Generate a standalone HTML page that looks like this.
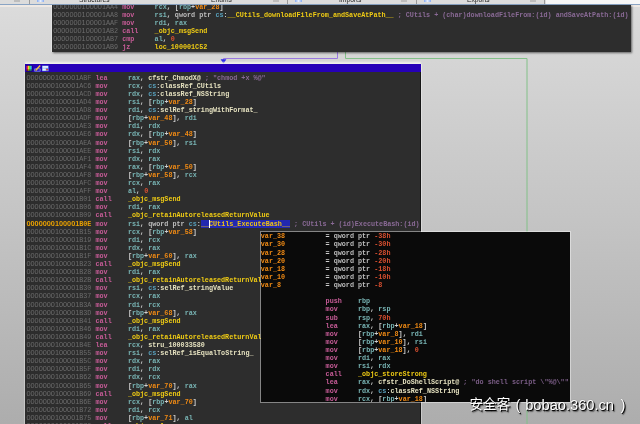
<!DOCTYPE html>
<html><head><meta charset="utf-8"><title>IDA graph view</title><style>
html,body{margin:0;padding:0}
body{width:640px;height:424px;overflow:hidden;position:relative;background:#c8c8c8}
#all{position:absolute;left:-4px;top:-4px;width:648px;height:432px;overflow:hidden;filter:blur(0.4px)}
#in{position:absolute;left:4px;top:4px;width:644px;height:428px;background:linear-gradient(#dcdcdc 0,#d5d5d5 60px,#c4c4c4 220px,#adadad 424px);font-family:"Liberation Mono",monospace}
.l{position:absolute;white-space:pre;font-size:6.766px;line-height:8.10px;height:8.10px;font-weight:bold;color:#d8d8d8}
.node{position:absolute;background:#2d2d2d;overflow:hidden}
.a{color:#6c6c6c;font-weight:normal}.ah{color:#e8a000}
.z{font-family:"Liberation Sans",sans-serif;font-size:7.301px}
.m{color:#c85c98}.r{color:#78b4b4}.s{color:#58a0bc}.v{color:#f08a14}.f{color:#f0cc14}.n{color:#e6e2c0}
.q{color:#bebebe}.d{color:#dc5030}.p{color:#d0d0d0}.c{color:#8a6a96}
.sel{background:#2228b0;color:#f0c414}
#pop .c{color:#7c5e88}
#tabs{position:absolute;left:0;top:0;width:640px;height:4px;background:#dcdcdc;overflow:hidden;font-family:"Liberation Sans",sans-serif}
#tabs span{position:absolute;top:-4.2px;font-size:6.7px;line-height:8px;color:#222}
#tabs i{position:absolute;top:0;width:1px;height:4px;background:#9a9a9a}
#tabs b{position:absolute;top:0;height:2px;display:block}
#wm{position:absolute;left:0;top:0;font-family:"Liberation Sans","Noto Sans CJK SC",sans-serif;color:#fff;text-shadow:1px 1px 0.6px rgba(0,0,0,.95),1.6px 1.6px 1.2px rgba(0,0,0,.55),0 0 1px rgba(0,0,0,.35)}
#wm span{position:absolute;white-space:pre;line-height:20px;top:395px;font-size:14.67px}
</style></head><body><div id="all"><div id="in">
<div id="tabs">
<b style="left:14px;width:6px;background:#bdbdbd"></b><i style="left:29px"></i><b style="left:37px;width:7px;background:linear-gradient(90deg,#86aaf0,#e8f0ff,#86aaf0)"></b>
<span style="left:79px">Structures</span>
<span style="left:211px">Enums</span><b style="left:273px;width:6px;background:#bdbdbd"></b><i style="left:287px"></i><b style="left:295px;width:7px;background:linear-gradient(90deg,#86aaf0,#e8f0ff,#86aaf0)"></b>
<span style="left:339px">Imports</span><b style="left:401px;width:6px;background:#bdbdbd"></b><i style="left:416px"></i><b style="left:424px;width:7px;background:linear-gradient(90deg,#86aaf0,#e8f0ff,#86aaf0)"></b>
<span style="left:467px">Exports</span><b style="left:530px;width:6px;background:#bdbdbd"></b><i style="left:544px"></i>
<div style="position:absolute;left:546px;top:0;width:98px;height:4px;background:#f6f6f6"></div>
</div>
<div style="position:absolute;left:0;top:4px;width:640px;height:1px;background:#8aa4c4"></div>
<div style="position:absolute;left:0;top:5px;width:640px;height:1.5px;background:#efe9e4"></div>

<svg style="position:absolute;left:0;top:0" width="640" height="424" viewBox="0 0 640 424">
<path d="M337.5 52 V58.5 H223.5 V61" fill="none" stroke="#9a78e0" stroke-width="1"/>
<path d="M220.6 59.2 H226.4 L223.5 63.8 Z" fill="#2a2ae8"/>
<path d="M345.5 52 V58.5 H527 V430" fill="none" stroke="#82c088" stroke-width="1"/>
</svg>

<div class="node" id="top" style="left:52px;top:5px;width:579px;height:47px;box-shadow:1px 1px 2px rgba(0,0,0,.55),-1px 0 0 rgba(255,255,255,.5)"><div class="l" style="left:1.20px;top:-2.30px"><span class="a z">0000000100001</span><span class="a">AA4</span> <span class="m">mov     </span><span class="r">rcx</span><span class="p">,</span> <span class="p">[</span><span class="r">rbp</span><span class="p">+</span><span class="v">var_28</span><span class="p">]</span></div><div class="l" style="left:1.20px;top:5.80px"><span class="a z">0000000100001</span><span class="a">AA8</span> <span class="m">mov     </span><span class="r">rsi</span><span class="p">,</span> <span class="q">qword ptr</span> <span class="s">cs</span><span class="p">:</span><span class="f">__CUtils_downloadFileFrom_andSaveAtPath__</span><span class="c"> ; CUtils + (char)downloadFileFrom:(id) andSaveAtPath:(id)</span></div><div class="l" style="left:1.20px;top:13.90px"><span class="a z">0000000100001</span><span class="a">AAF</span> <span class="m">mov     </span><span class="r">rdi</span><span class="p">,</span> <span class="r">rax</span></div><div class="l" style="left:1.20px;top:22.00px"><span class="a z">0000000100001</span><span class="a">AB2</span> <span class="m">call    </span><span class="f">_objc_msgSend</span></div><div class="l" style="left:1.20px;top:30.10px"><span class="a z">0000000100001</span><span class="a">AB7</span> <span class="m">cmp     </span><span class="r">al</span><span class="p">,</span> <span class="d">0</span></div><div class="l" style="left:1.20px;top:38.20px"><span class="a z">0000000100001</span><span class="a">AB9</span> <span class="m">jz      </span><span class="f">loc_100001C52</span></div></div>
<div class="node" id="main" style="left:25px;top:72px;width:396px;height:356px;box-shadow:inset -1px 0 0 #161616,1px 0 0 rgba(255,255,255,.35),-1px 0 0 rgba(255,255,255,.3)"><div class="l" style="left:1.50px;top:1.70px"><span class="a z">0000000100001</span><span class="a">ABF</span> <span class="m">lea     </span><span class="r">rax</span><span class="p">,</span> <span class="n">cfstr_ChmodX@</span><span class="c"> ; "chmod +x %@"</span></div><div class="l" style="left:1.50px;top:9.80px"><span class="a z">0000000100001</span><span class="a">AC6</span> <span class="m">mov     </span><span class="r">rcx</span><span class="p">,</span> <span class="s">cs</span><span class="p">:</span><span class="n">classRef_CUtils</span></div><div class="l" style="left:1.50px;top:17.90px"><span class="a z">0000000100001</span><span class="a">ACD</span> <span class="m">mov     </span><span class="r">rdx</span><span class="p">,</span> <span class="s">cs</span><span class="p">:</span><span class="n">classRef_NSString</span></div><div class="l" style="left:1.50px;top:26.00px"><span class="a z">0000000100001</span><span class="a">AD4</span> <span class="m">mov     </span><span class="r">rsi</span><span class="p">,</span> <span class="p">[</span><span class="r">rbp</span><span class="p">+</span><span class="v">var_28</span><span class="p">]</span></div><div class="l" style="left:1.50px;top:34.10px"><span class="a z">0000000100001</span><span class="a">AD8</span> <span class="m">mov     </span><span class="r">rdi</span><span class="p">,</span> <span class="s">cs</span><span class="p">:</span><span class="n">selRef_stringWithFormat_</span></div><div class="l" style="left:1.50px;top:42.20px"><span class="a z">0000000100001</span><span class="a">ADF</span> <span class="m">mov     </span><span class="p">[</span><span class="r">rbp</span><span class="p">+</span><span class="v">var_48</span><span class="p">]</span><span class="p">,</span> <span class="r">rdi</span></div><div class="l" style="left:1.50px;top:50.30px"><span class="a z">0000000100001</span><span class="a">AE3</span> <span class="m">mov     </span><span class="r">rdi</span><span class="p">,</span> <span class="r">rdx</span></div><div class="l" style="left:1.50px;top:58.40px"><span class="a z">0000000100001</span><span class="a">AE6</span> <span class="m">mov     </span><span class="r">rdx</span><span class="p">,</span> <span class="p">[</span><span class="r">rbp</span><span class="p">+</span><span class="v">var_48</span><span class="p">]</span></div><div class="l" style="left:1.50px;top:66.50px"><span class="a z">0000000100001</span><span class="a">AEA</span> <span class="m">mov     </span><span class="p">[</span><span class="r">rbp</span><span class="p">+</span><span class="v">var_50</span><span class="p">]</span><span class="p">,</span> <span class="r">rsi</span></div><div class="l" style="left:1.50px;top:74.60px"><span class="a z">0000000100001</span><span class="a">AEE</span> <span class="m">mov     </span><span class="r">rsi</span><span class="p">,</span> <span class="r">rdx</span></div><div class="l" style="left:1.50px;top:82.70px"><span class="a z">0000000100001</span><span class="a">AF1</span> <span class="m">mov     </span><span class="r">rdx</span><span class="p">,</span> <span class="r">rax</span></div><div class="l" style="left:1.50px;top:90.80px"><span class="a z">0000000100001</span><span class="a">AF4</span> <span class="m">mov     </span><span class="r">rax</span><span class="p">,</span> <span class="p">[</span><span class="r">rbp</span><span class="p">+</span><span class="v">var_50</span><span class="p">]</span></div><div class="l" style="left:1.50px;top:98.90px"><span class="a z">0000000100001</span><span class="a">AF8</span> <span class="m">mov     </span><span class="p">[</span><span class="r">rbp</span><span class="p">+</span><span class="v">var_58</span><span class="p">]</span><span class="p">,</span> <span class="r">rcx</span></div><div class="l" style="left:1.50px;top:107.00px"><span class="a z">0000000100001</span><span class="a">AFC</span> <span class="m">mov     </span><span class="r">rcx</span><span class="p">,</span> <span class="r">rax</span></div><div class="l" style="left:1.50px;top:115.10px"><span class="a z">0000000100001</span><span class="a">AFF</span> <span class="m">mov     </span><span class="r">al</span><span class="p">,</span> <span class="d">0</span></div><div class="l" style="left:1.50px;top:123.20px"><span class="a z">0000000100001</span><span class="a">B01</span> <span class="m">call    </span><span class="f">_objc_msgSend</span></div><div class="l" style="left:1.50px;top:131.30px"><span class="a z">0000000100001</span><span class="a">B06</span> <span class="m">mov     </span><span class="r">rdi</span><span class="p">,</span> <span class="r">rax</span></div><div class="l" style="left:1.50px;top:139.40px"><span class="a z">0000000100001</span><span class="a">B09</span> <span class="m">call    </span><span class="f">_objc_retainAutoreleasedReturnValue</span></div><div class="l" style="left:1.50px;top:147.50px"><span class="ah z">0000000100001</span><span class="ah">B0E</span> <span class="m">mov     </span><span class="r">rsi</span><span class="p">,</span> <span class="q">qword ptr</span> <span class="s">cs</span><span class="p">:</span><span class="f sel">__CUtils_ExecuteBash__</span><span class="c"> ; CUtils + (id)ExecuteBash:(id)</span></div><div class="l" style="left:1.50px;top:155.60px"><span class="a z">0000000100001</span><span class="a">B15</span> <span class="m">mov     </span><span class="r">rcx</span><span class="p">,</span> <span class="p">[</span><span class="r">rbp</span><span class="p">+</span><span class="v">var_58</span><span class="p">]</span></div><div class="l" style="left:1.50px;top:163.70px"><span class="a z">0000000100001</span><span class="a">B19</span> <span class="m">mov     </span><span class="r">rdi</span><span class="p">,</span> <span class="r">rcx</span></div><div class="l" style="left:1.50px;top:171.80px"><span class="a z">0000000100001</span><span class="a">B1C</span> <span class="m">mov     </span><span class="r">rdx</span><span class="p">,</span> <span class="r">rax</span></div><div class="l" style="left:1.50px;top:179.90px"><span class="a z">0000000100001</span><span class="a">B1F</span> <span class="m">mov     </span><span class="p">[</span><span class="r">rbp</span><span class="p">+</span><span class="v">var_60</span><span class="p">]</span><span class="p">,</span> <span class="r">rax</span></div><div class="l" style="left:1.50px;top:188.00px"><span class="a z">0000000100001</span><span class="a">B23</span> <span class="m">call    </span><span class="f">_objc_msgSend</span></div><div class="l" style="left:1.50px;top:196.10px"><span class="a z">0000000100001</span><span class="a">B28</span> <span class="m">mov     </span><span class="r">rdi</span><span class="p">,</span> <span class="r">rax</span></div><div class="l" style="left:1.50px;top:204.20px"><span class="a z">0000000100001</span><span class="a">B2B</span> <span class="m">call    </span><span class="f">_objc_retainAutoreleasedReturnValue</span></div><div class="l" style="left:1.50px;top:212.30px"><span class="a z">0000000100001</span><span class="a">B30</span> <span class="m">mov     </span><span class="r">rsi</span><span class="p">,</span> <span class="s">cs</span><span class="p">:</span><span class="n">selRef_stringValue</span></div><div class="l" style="left:1.50px;top:220.40px"><span class="a z">0000000100001</span><span class="a">B37</span> <span class="m">mov     </span><span class="r">rcx</span><span class="p">,</span> <span class="r">rax</span></div><div class="l" style="left:1.50px;top:228.50px"><span class="a z">0000000100001</span><span class="a">B3A</span> <span class="m">mov     </span><span class="r">rdi</span><span class="p">,</span> <span class="r">rcx</span></div><div class="l" style="left:1.50px;top:236.60px"><span class="a z">0000000100001</span><span class="a">B3D</span> <span class="m">mov     </span><span class="p">[</span><span class="r">rbp</span><span class="p">+</span><span class="v">var_68</span><span class="p">]</span><span class="p">,</span> <span class="r">rax</span></div><div class="l" style="left:1.50px;top:244.70px"><span class="a z">0000000100001</span><span class="a">B41</span> <span class="m">call    </span><span class="f">_objc_msgSend</span></div><div class="l" style="left:1.50px;top:252.80px"><span class="a z">0000000100001</span><span class="a">B46</span> <span class="m">mov     </span><span class="r">rdi</span><span class="p">,</span> <span class="r">rax</span></div><div class="l" style="left:1.50px;top:260.90px"><span class="a z">0000000100001</span><span class="a">B49</span> <span class="m">call    </span><span class="f">_objc_retainAutoreleasedReturnValue</span></div><div class="l" style="left:1.50px;top:269.00px"><span class="a z">0000000100001</span><span class="a">B4E</span> <span class="m">lea     </span><span class="r">rcx</span><span class="p">,</span> <span class="n">stru_100033580</span></div><div class="l" style="left:1.50px;top:277.10px"><span class="a z">0000000100001</span><span class="a">B55</span> <span class="m">mov     </span><span class="r">rsi</span><span class="p">,</span> <span class="s">cs</span><span class="p">:</span><span class="n">selRef_isEqualToString_</span></div><div class="l" style="left:1.50px;top:285.20px"><span class="a z">0000000100001</span><span class="a">B5C</span> <span class="m">mov     </span><span class="r">rdx</span><span class="p">,</span> <span class="r">rax</span></div><div class="l" style="left:1.50px;top:293.30px"><span class="a z">0000000100001</span><span class="a">B5F</span> <span class="m">mov     </span><span class="r">rdi</span><span class="p">,</span> <span class="r">rdx</span></div><div class="l" style="left:1.50px;top:301.40px"><span class="a z">0000000100001</span><span class="a">B62</span> <span class="m">mov     </span><span class="r">rdx</span><span class="p">,</span> <span class="r">rcx</span></div><div class="l" style="left:1.50px;top:309.50px"><span class="a z">0000000100001</span><span class="a">B65</span> <span class="m">mov     </span><span class="p">[</span><span class="r">rbp</span><span class="p">+</span><span class="v">var_70</span><span class="p">]</span><span class="p">,</span> <span class="r">rax</span></div><div class="l" style="left:1.50px;top:317.60px"><span class="a z">0000000100001</span><span class="a">B69</span> <span class="m">call    </span><span class="f">_objc_msgSend</span></div><div class="l" style="left:1.50px;top:325.70px"><span class="a z">0000000100001</span><span class="a">B6E</span> <span class="m">mov     </span><span class="r">rcx</span><span class="p">,</span> <span class="p">[</span><span class="r">rbp</span><span class="p">+</span><span class="v">var_70</span><span class="p">]</span></div><div class="l" style="left:1.50px;top:333.80px"><span class="a z">0000000100001</span><span class="a">B72</span> <span class="m">mov     </span><span class="r">rdi</span><span class="p">,</span> <span class="r">rcx</span></div><div class="l" style="left:1.50px;top:341.90px"><span class="a z">0000000100001</span><span class="a">B75</span> <span class="m">mov     </span><span class="p">[</span><span class="r">rbp</span><span class="p">+</span><span class="v">var_71</span><span class="p">]</span><span class="p">,</span> <span class="r">al</span></div><div class="l" style="left:1.50px;top:350.00px"><span class="a z">0000000100001</span><span class="a">B78</span> <span class="m">call    </span><span class="f">_objc_release</span></div>
<div style="position:absolute;left:184.3px;top:148px;width:1px;height:7.5px;background:#fff"></div>
</div>
<div id="title" style="position:absolute;left:25px;top:64px;width:396px;height:8.3px;background:#2600b8;box-shadow:0 -2px 1.5px rgba(246,246,240,.75),1px 0 0 rgba(255,255,255,.4)">
<svg style="position:absolute;left:0;top:0" width="26" height="8" viewBox="0 0 26 8">
<defs><linearGradient id="sp" x1="0" x2="1" y1="0" y2="0"><stop offset="0" stop-color="#d020d0"/><stop offset=".2" stop-color="#f03030"/><stop offset=".4" stop-color="#f0f030"/><stop offset=".6" stop-color="#30e040"/><stop offset=".8" stop-color="#30d0e0"/><stop offset="1" stop-color="#3030f0"/></linearGradient></defs>
<rect x="1.1" y="1.5" width="6.3" height="5.9" fill="#101030"/><rect x="1.4" y="1.8" width="5.6" height="5" fill="url(#sp)"/><rect x="1.4" y="5.2" width="5.6" height="1.8" fill="#000" opacity=".35"/>
<path d="M9.6 4.8 H15.2 V7.2 H9.6 Z" fill="none" stroke="#7a9cf0" stroke-width="0.8"/><path d="M10.6 6.4 L15.2 1.4" stroke="#f0c040" stroke-width="1.5"/>
<rect x="17" y="1.6" width="6.6" height="5.6" fill="#6a9cf0"/><rect x="17.6" y="2.2" width="5.4" height="1.5" fill="#fff"/><rect x="17.6" y="4.4" width="3.2" height="2.2" fill="#e8f0ff"/><rect x="21.2" y="4.8" width="1.8" height="1.5" fill="#e04040"/>
</svg>
</div>
<div class="node" id="pop" style="left:260px;top:231px;width:311px;height:172.3px;background:#0a0a0a;box-sizing:border-box;border:1px solid rgba(255,255,255,.42);background-clip:padding-box">
<div style="position:absolute;left:-1px;top:-1px"><div class="l" style="left:0.80px;top:1.30px"><span class="v">var_38          </span><span class="p">= </span><span class="q">qword ptr </span><span class="d">-38h</span></div><div class="l" style="left:0.80px;top:9.42px"><span class="v">var_30          </span><span class="p">= </span><span class="q">qword ptr </span><span class="d">-30h</span></div><div class="l" style="left:0.80px;top:17.54px"><span class="v">var_28          </span><span class="p">= </span><span class="q">qword ptr </span><span class="d">-28h</span></div><div class="l" style="left:0.80px;top:25.66px"><span class="v">var_20          </span><span class="p">= </span><span class="q">qword ptr </span><span class="d">-20h</span></div><div class="l" style="left:0.80px;top:33.78px"><span class="v">var_18          </span><span class="p">= </span><span class="q">qword ptr </span><span class="d">-18h</span></div><div class="l" style="left:0.80px;top:41.90px"><span class="v">var_10          </span><span class="p">= </span><span class="q">qword ptr </span><span class="d">-10h</span></div><div class="l" style="left:0.80px;top:50.02px"><span class="v">var_8           </span><span class="p">= </span><span class="q">qword ptr </span><span class="d">-8</span></div><div class="l" style="left:0.80px;top:66.26px">                <span class="m">push    </span><span class="r">rbp</span></div><div class="l" style="left:0.80px;top:74.38px">                <span class="m">mov     </span><span class="r">rbp</span><span class="p">,</span> <span class="r">rsp</span></div><div class="l" style="left:0.80px;top:82.50px">                <span class="m">sub     </span><span class="r">rsp</span><span class="p">,</span> <span class="d">70h</span></div><div class="l" style="left:0.80px;top:90.62px">                <span class="m">lea     </span><span class="r">rax</span><span class="p">,</span> <span class="p">[</span><span class="r">rbp</span><span class="p">+</span><span class="v">var_18</span><span class="p">]</span></div><div class="l" style="left:0.80px;top:98.74px">                <span class="m">mov     </span><span class="p">[</span><span class="r">rbp</span><span class="p">+</span><span class="v">var_8</span><span class="p">]</span><span class="p">,</span> <span class="r">rdi</span></div><div class="l" style="left:0.80px;top:106.86px">                <span class="m">mov     </span><span class="p">[</span><span class="r">rbp</span><span class="p">+</span><span class="v">var_10</span><span class="p">]</span><span class="p">,</span> <span class="r">rsi</span></div><div class="l" style="left:0.80px;top:114.98px">                <span class="m">mov     </span><span class="p">[</span><span class="r">rbp</span><span class="p">+</span><span class="v">var_18</span><span class="p">]</span><span class="p">,</span> <span class="d">0</span></div><div class="l" style="left:0.80px;top:123.10px">                <span class="m">mov     </span><span class="r">rdi</span><span class="p">,</span> <span class="r">rax</span></div><div class="l" style="left:0.80px;top:131.22px">                <span class="m">mov     </span><span class="r">rsi</span><span class="p">,</span> <span class="r">rdx</span></div><div class="l" style="left:0.80px;top:139.34px">                <span class="m">call    </span><span class="f">_objc_storeStrong</span></div><div class="l" style="left:0.80px;top:147.46px">                <span class="m">lea     </span><span class="r">rax</span><span class="p">,</span> <span class="n">cfstr_DoShellScript@</span><span class="c"> ; "do shell script \"%@\""</span></div><div class="l" style="left:0.80px;top:155.58px">                <span class="m">mov     </span><span class="r">rdx</span><span class="p">,</span> <span class="s">cs</span><span class="p">:</span><span class="n">classRef_NSString</span></div><div class="l" style="left:0.80px;top:163.70px">                <span class="m">mov     </span><span class="r">rcx</span><span class="p">,</span> <span class="p">[</span><span class="r">rbp</span><span class="p">+</span><span class="v">var_18</span><span class="p">]</span></div></div></div>
<div id="wm"><span style="left:469.5px;font-size:13.6px">安全客</span><span style="left:515.5px">(</span><span style="left:525.2px">bobao.360.cn</span><span style="left:620.5px">)</span></div>
</div></div></body></html>
